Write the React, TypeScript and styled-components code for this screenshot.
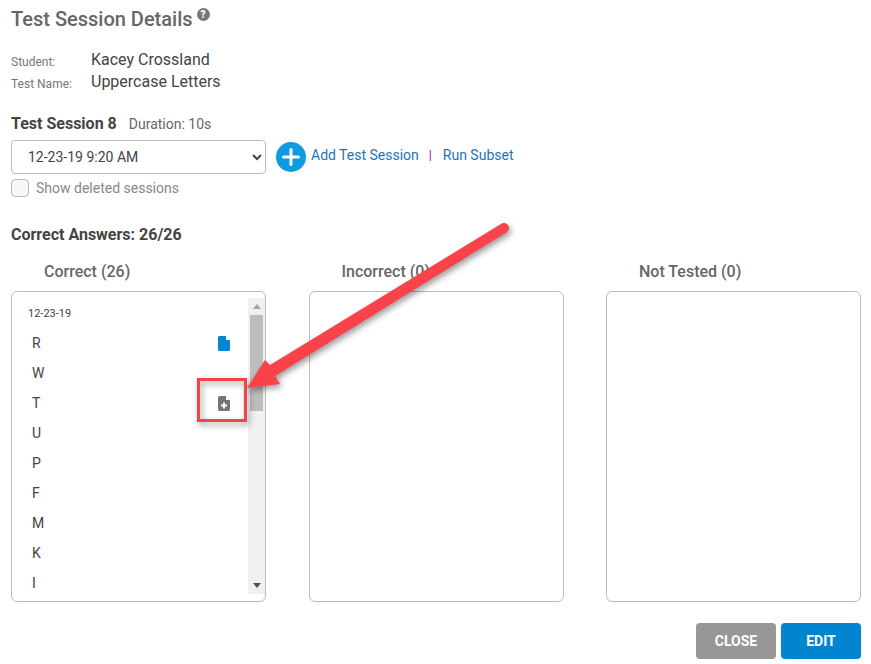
import React from 'react';
import styled, { createGlobalStyle } from 'styled-components';

const GlobalStyle = createGlobalStyle`
  html, body {
    margin: 0;
    padding: 0;
    background: #fff;
    font-family: Roboto, "Liberation Sans", sans-serif;
  }
`;

const Page = styled.div`
  position: relative;
  width: 871px;
  height: 664px;
  box-sizing: border-box;
  padding: 8px 10px 0 11px;
  overflow: hidden;
`;

const TitleRow = styled.div`
  display: flex;
  align-items: flex-start;
  gap: 4px;
  height: 24px;
`;

const Title = styled.h1`
  margin: -1px 0 0;
  font-size: 20px;
  line-height: 24px;
  font-weight: 500;
  color: #666;
`;

const HelpBadge = styled.span`
  display: block;
  width: 13px;
  height: 13px;
  border-radius: 50%;
  background: #777;
  color: #fff;
  font-size: 10px;
  line-height: 13px;
  font-weight: 900;
  text-align: center;
`;

const InfoGrid = styled.dl`
  display: grid;
  grid-template-columns: 80px 1fr;
  grid-auto-rows: 22px;
  margin: 17px 0 0;
`;

const InfoLabel = styled.dt`
  font-size: 12px;
  line-height: 22px;
  padding-top: 2px;
  color: #777;
`;

const InfoValue = styled.dd`
  margin: 0;
  font-size: 16px;
  line-height: 22px;
  color: #444;
`;

const SessionHeading = styled.div`
  display: flex;
  align-items: baseline;
  gap: 12px;
  margin-top: 21px;
  height: 20px;
`;

const SessionTitle = styled.span`
  font-size: 16px;
  line-height: 20px;
  font-weight: 700;
  color: #444;
`;

const Duration = styled.span`
  font-size: 14px;
  color: #666;
`;

const SessionRow = styled.div`
  display: flex;
  align-items: center;
  gap: 10px;
  margin-top: 6px;
`;

const SessionSelect = styled.select`
  width: 255px;
  height: 34px;
  box-sizing: border-box;
  padding: 0 0 0 12px;
  border: 1px solid #bbb;
  border-radius: 4px;
  background: #fff;
  font-family: inherit;
  font-size: 14px;
  color: #444;
`;

const AddButton = styled.span`
  display: block;
  width: 30px;
  height: 30px;
`;

const Links = styled.div`
  display: flex;
  align-items: center;
  gap: 10px;
  margin: 0 0 4px -5px;
  font-size: 14px;
  color: #1b75bc;
`;

const Separator = styled.span`
  margin-right: 1px;
  color: #8e1f9a;
  font-size: 12px;
  font-weight: 500;
`;

const DeletedRow = styled.label`
  display: flex;
  align-items: center;
  gap: 7px;
  margin-top: 5px;
  font-size: 14px;
  color: #888;
`;

const DeletedCheck = styled.input`
  appearance: none;
  width: 18px;
  height: 18px;
  margin: 0;
  border: 1px solid #bbb;
  border-radius: 4px;
  background: #f7f7f7;
`;

const AnswersHeading = styled.div`
  margin-top: 28px;
  height: 20px;
  font-size: 16px;
  line-height: 20px;
  font-weight: 700;
  color: #444;
`;

const Columns = styled.div`
  display: grid;
  grid-template-columns: 255px 255px 255px;
  column-gap: 42.5px;
  margin-top: 17px;
`;

const ColumnTitle = styled.div`
  height: 20px;
  padding-left: 33px;
  font-size: 16px;
  line-height: 20px;
  font-weight: 500;
  color: #666;
`;

const Panel = styled.div`
  display: flex;
  box-sizing: border-box;
  height: 311px;
  margin-top: 9px;
  border: 1px solid #bbb;
  border-radius: 6px;
  overflow: hidden;
`;

const AnswerList = styled.div`
  flex: 1;
  padding: 7px 18px 0 16px;
`;

const DateLabel = styled.div`
  height: 29px;
  font-size: 11px;
  line-height: 30px;
  color: #444;
`;

const AnswerRow = styled.div`
  display: flex;
  align-items: center;
  justify-content: space-between;
  height: 30px;
  padding-left: 4px;
  font-size: 14px;
  color: #444;
`;

const Scrollbar = styled.div`
  display: flex;
  flex-direction: column;
  align-items: center;
  width: 17px;
  margin: 6px 0 7px;
  background: #f0f0f0;
`;

const ScrollArrow = styled.span<{ $up?: boolean }>`
  display: block;
  flex: none;
  width: 0;
  height: 0;
  margin: 6px 0;
  border-left: 4px solid transparent;
  border-right: 4px solid transparent;
  border-bottom: ${({ $up }) => ($up ? '5px solid #a3a3a3' : 'none')};
  border-top: ${({ $up }) => ($up ? 'none' : '5px solid #505050')};
`;

const ScrollThumb = styled.div`
  flex: none;
  width: 13px;
  height: 96px;
  background: #bdbdbd;
`;

const ScrollGap = styled.div`
  flex: 1;
`;

const Footer = styled.div`
  display: flex;
  justify-content: flex-end;
  gap: 5px;
  margin-top: 21px;
`;

const ActionButton = styled.button<{ $primary?: boolean }>`
  width: 80px;
  height: 36px;
  padding: 0;
  border: none;
  border-radius: 4px;
  background: ${({ $primary }) => ($primary ? '#0285d0' : '#979797')};
  color: #fff;
  font-family: inherit;
  font-size: 14px;
  font-weight: 700;
`;

const Annotation = styled.svg`
  position: absolute;
  left: 0;
  top: 0;
  width: 871px;
  height: 664px;
  pointer-events: none;
  filter: drop-shadow(2px 3px 3px rgba(0, 0, 0, 0.4));
`;

const PlusCircle = () => (
  <svg width="30" height="30" viewBox="0 0 30 30">
    <circle cx="15" cy="15" r="15" fill="#0f9be0" />
    <path d="M15 7.5v15M7.5 15h15" stroke="#fff" strokeWidth="3" strokeLinecap="round" />
  </svg>
);

const FileIcon = ({ color, plus }: { color: string; plus?: boolean }) => (
  <svg width="12" height="15" viewBox="0 0 12 15">
    <path
      d="M1.5 0H7.5L12 4.5V13.5A1.5 1.5 0 0 1 10.5 15H1.5A1.5 1.5 0 0 1 0 13.5V1.5A1.5 1.5 0 0 1 1.5 0Z"
      fill={color}
    />
    <path d="M8 0.3V4H11.7Z" fill="#fff" />
    {plus && <path d="M6 6.5v6M3 9.5h6" stroke="#fff" strokeWidth="2" />}
  </svg>
);

const letters = ['R', 'W', 'T', 'U', 'P', 'F', 'M', 'K', 'I'];

export default function App() {
  return (
    <Page>
      <GlobalStyle />
      <TitleRow>
        <Title>Test Session Details</Title>
        <HelpBadge>?</HelpBadge>
      </TitleRow>

      <InfoGrid>
        <InfoLabel>Student:</InfoLabel>
        <InfoValue>Kacey Crossland</InfoValue>
        <InfoLabel>Test Name:</InfoLabel>
        <InfoValue>Uppercase Letters</InfoValue>
      </InfoGrid>

      <SessionHeading>
        <SessionTitle>Test Session 8</SessionTitle>
        <Duration>Duration: 10s</Duration>
      </SessionHeading>

      <SessionRow>
        <SessionSelect defaultValue="a">
          <option value="a">12-23-19 9:20 AM</option>
        </SessionSelect>
        <AddButton>
          <PlusCircle />
        </AddButton>
        <Links>
          <span>Add Test Session</span>
          <Separator>|</Separator>
          <span>Run Subset</span>
        </Links>
      </SessionRow>

      <DeletedRow>
        <DeletedCheck type="checkbox" />
        Show deleted sessions
      </DeletedRow>

      <AnswersHeading>Correct Answers: 26/26</AnswersHeading>

      <Columns>
        <div>
          <ColumnTitle>Correct (26)</ColumnTitle>
          <Panel>
            <AnswerList>
              <DateLabel>12-23-19</DateLabel>
              {letters.map((letter) => (
                <AnswerRow key={letter}>
                  {letter}
                  {letter === 'R' && <FileIcon color="#0285d0" />}
                  {letter === 'T' && <FileIcon color="#757575" plus />}
                </AnswerRow>
              ))}
            </AnswerList>
            <Scrollbar>
              <ScrollArrow $up />
              <ScrollThumb />
              <ScrollGap />
              <ScrollArrow />
            </Scrollbar>
          </Panel>
        </div>
        <div>
          <ColumnTitle>Incorrect (0)</ColumnTitle>
          <Panel />
        </div>
        <div>
          <ColumnTitle>Not Tested (0)</ColumnTitle>
          <Panel />
        </div>
      </Columns>

      <Footer>
        <ActionButton>CLOSE</ActionButton>
        <ActionButton $primary>EDIT</ActionButton>
      </Footer>

      <Annotation viewBox="0 0 871 664">
        <rect x="198.5" y="379.5" width="47" height="41" fill="none" stroke="#f04448" strokeWidth="3" />
        <path
          d="M501 224 L270 365 L265 360 L247 388 L280 384 L275 376 L507 232 A5 5 0 0 0 501 224Z"
          fill="#f9424a"
        />
      </Annotation>
    </Page>
  );
}
